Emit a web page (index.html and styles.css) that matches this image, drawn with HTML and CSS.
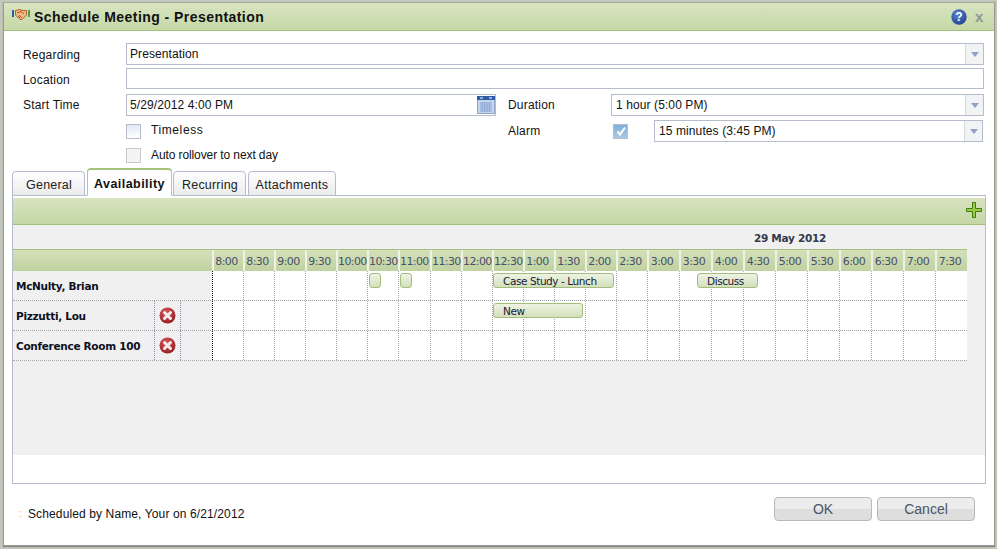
FILE: index.html
```html
<!DOCTYPE html>
<html lang="en">
<head>
<meta charset="utf-8">
<title>Schedule Meeting - Presentation</title>
<link rel="stylesheet" href="styles.css">
</head>
<body>
<div class="dialog">
  <header class="titlebar">
    <svg class="ti-icon" width="18" height="14" viewBox="0 0 18 14"><rect x="0" y="2" width="2" height="7" fill="#2f5f9e"/><rect x="16" y="2" width="2" height="7" fill="#5c9a4a"/><path d="M3.5 2.5 L8 1.5 L10 2.5 L14.5 2.5 L14.5 7 L10 11.5 L8 11.5 L3.5 7 Z" fill="#f0b98a" stroke="#b5642e"/><path d="M5 5 L9 3.5 L12 6 M7 7 L10 10 M6 8 L8 10" fill="none" stroke="#a8561f"/></svg>
    <span class="ti-text">Schedule Meeting - Presentation</span>
    <svg class="help" width="16" height="16" viewBox="0 0 16 16"><defs><radialGradient id="hg" cx="40%" cy="30%" r="80%"><stop offset="0" stop-color="#5b82cf"/><stop offset="1" stop-color="#1c3f8f"/></radialGradient></defs><circle cx="8" cy="8" r="7.7" fill="url(#hg)"/><text x="8" y="12.4" text-anchor="middle" class="help-q">?</text></svg>
    <span class="close">x</span>
  </header>

  <div class="form">
    <div class="row r-regarding">
      <label class="lbl">Regarding</label>
      <div class="field grow"><span class="val">Presentation</span><span class="drop"><i></i></span></div>
    </div>
    <div class="row r-location">
      <label class="lbl">Location</label>
      <div class="field grow"></div>
    </div>
    <div class="row r-start">
      <label class="lbl">Start Time</label>
      <div class="field start"><span class="val">5/29/2012 4:00 PM</span>
        <svg class="cal" width="18" height="18" viewBox="0 0 18 18"><rect x="0.5" y="0.5" width="17" height="17" fill="#c5d5ee" stroke="#8ea4c8"/><rect x="0" y="0" width="18" height="4" fill="#2f5aa5"/><rect x="3" y="1.5" width="3" height="1" fill="#fff"/><rect x="12" y="1.5" width="3" height="1" fill="#fff"/><path d="M3 7h12M3 9h12M3 11h12M3 13h12M3 15h12M5 6v10M7.5 6v10M10 6v10M12.5 6v10" stroke="#8ea9d8" stroke-width="1" fill="none"/></svg>
      </div>
      <label class="lbl2">Duration</label>
      <div class="field dur"><span class="val">1 hour (5:00 PM)</span><span class="drop"><i></i></span></div>
    </div>
    <div class="row r-alarm">
      <span class="cb"></span><span class="cbl">Timeless</span>
      <label class="lbl2 alarm">Alarm</label>
      <span class="cb checked"><svg width="12" height="12" viewBox="0 0 12 12"><path d="M2.5 6.5 L5 9.5 L10 2.5" fill="none" stroke="#fff" stroke-width="2"/></svg></span>
      <div class="field alm"><span class="val">15 minutes (3:45 PM)</span><span class="drop"><i></i></span></div>
    </div>
    <div class="row r-auto">
      <span class="cb off"></span><span class="cbl">Auto rollover to next day</span>
    </div>
  </div>

  <nav class="tabs">
    <span class="tab t1">General</span>
    <span class="tab active t2">Availability</span>
    <span class="tab t3">Recurring</span>
    <span class="tab t4">Attachments</span>
  </nav>

  <section class="panel">
    <div class="toolbar">
      <svg width="16" height="16" viewBox="0 0 16 16"><path d="M6.5 0.5h3v6h6v3h-6v6h-3v-6h-6v-3h6z" fill="#9ccb45" stroke="#3f7a12"/></svg>
    </div>
    <div class="sched">
      <div class="date"><span>29 May 2012</span></div>
      <div class="grid head">
        <div class="hname"></div>
        <div class="t">8:00</div><div class="t">8:30</div><div class="t">9:00</div><div class="t">9:30</div><div class="t">10:00</div><div class="t">10:30</div><div class="t">11:00</div><div class="t">11:30</div><div class="t">12:00</div><div class="t">12:30</div><div class="t">1:00</div><div class="t">1:30</div><div class="t">2:00</div><div class="t">2:30</div><div class="t">3:00</div><div class="t">3:30</div><div class="t">4:00</div><div class="t">4:30</div><div class="t">5:00</div><div class="t">5:30</div><div class="t">6:00</div><div class="t">6:30</div><div class="t">7:00</div><div class="t">7:30</div>
      </div>
      <div class="grid body">
        <div class="name plain">McNulty, Brian</div>
        <div class="c"></div><div class="c"></div><div class="c"></div><div class="c"></div><div class="c"></div><div class="c"></div><div class="c"></div><div class="c"></div><div class="c"></div><div class="c"></div><div class="c"></div><div class="c"></div><div class="c"></div><div class="c"></div><div class="c"></div><div class="c"></div><div class="c"></div><div class="c"></div><div class="c"></div><div class="c"></div><div class="c"></div><div class="c"></div><div class="c"></div><div class="c"></div>
        <span class="ev e1"></span><span class="ev e2"></span><span class="ev e3">Case Study - Lunch</span><span class="ev e4">Discuss</span>
      </div>
      <div class="grid body">
        <div class="name">Pizzutti, Lou</div>
        <div class="rm"><svg width="17" height="17" viewBox="0 0 17 17"><use href="#rmx"/></svg></div><div class="sp"></div>
        <div class="c"></div><div class="c"></div><div class="c"></div><div class="c"></div><div class="c"></div><div class="c"></div><div class="c"></div><div class="c"></div><div class="c"></div><div class="c"></div><div class="c"></div><div class="c"></div><div class="c"></div><div class="c"></div><div class="c"></div><div class="c"></div><div class="c"></div><div class="c"></div><div class="c"></div><div class="c"></div><div class="c"></div><div class="c"></div><div class="c"></div><div class="c"></div>
        <span class="ev e5">New</span>
      </div>
      <div class="grid body">
        <div class="name">Conference Room 100</div>
        <div class="rm"><svg width="17" height="17" viewBox="0 0 17 17"><use href="#rmx"/></svg></div><div class="sp"></div>
        <div class="c"></div><div class="c"></div><div class="c"></div><div class="c"></div><div class="c"></div><div class="c"></div><div class="c"></div><div class="c"></div><div class="c"></div><div class="c"></div><div class="c"></div><div class="c"></div><div class="c"></div><div class="c"></div><div class="c"></div><div class="c"></div><div class="c"></div><div class="c"></div><div class="c"></div><div class="c"></div><div class="c"></div><div class="c"></div><div class="c"></div><div class="c"></div>
      </div>
    </div>
  </section>

  <footer class="foot">
    <span class="dots">:</span>
    <span class="sched-by">Scheduled by Name, Your on 6/21/2012</span>
    <button class="btn ok">OK</button>
    <button class="btn">Cancel</button>
  </footer>
</div>
<svg class="defs" width="0" height="0"><defs>
  <radialGradient id="rg" cx="40%" cy="30%" r="80%"><stop offset="0" stop-color="#d8565a"/><stop offset="1" stop-color="#8e1c20"/></radialGradient>
  <g id="rmx"><circle cx="8.5" cy="8.5" r="8" fill="url(#rg)"/><path d="M5.5 5.5 L11.5 11.5 M11.5 5.5 L5.5 11.5" stroke="#f4ecec" stroke-width="3" stroke-linecap="round"/></g>
</defs></svg>
</body>
</html>
```
FILE: styles.css
```css
* { box-sizing: border-box; }
html, body { margin: 0; height: 100%; }
body {
  width: 997px; height: 549px; overflow: hidden;
  padding: 2px 2px 3px 3px;
  background: #c4c7bb;
  font-family: "Liberation Sans", Arial, sans-serif;
  font-size: 12px; color: #111;
}
.defs { position: absolute; }
.dialog {
  width: 992px; height: 544px;
  background: #fff;
  border: 1px solid #9b9b92;
  border-top-color: #a5a89e;
  display: flex; flex-direction: column;
  box-shadow: 0 1px 1px #888;
}
.titlebar {
  height: 28px; flex: none;
  display: flex; align-items: center;
  padding: 0 10px 0 8px;
  background: linear-gradient(#d8e4c0, #c5d8a7);
  border-bottom: 1px solid #a4bf7c;
}
.ti-icon { margin: -4px 4px 0 0; }
.ti-text { font-weight: bold; font-size: 14px; letter-spacing: .45px; color: #111; flex: 1; }
.help { margin-right: 8px; }
.help-q { font: bold 12px "Liberation Sans", sans-serif; fill: #fff; }
.close { font: bold 15px "Liberation Sans", sans-serif; color: #87998f; width: 9px; line-height: 12px; padding-top: 0; margin-top: 1px; }

.form { padding: 12px 10px 0 19px; flex: none; height: 141px; }
.row { display: flex; align-items: center; }
.r-regarding { height: 22px; margin-bottom: 3px; }
.r-location { height: 21px; margin-bottom: 5px; }
.r-start { height: 22px; margin-bottom: 4px; }
.r-alarm { height: 22px; margin-bottom: 4px; padding-left: 103px; }
.r-auto { height: 18px; padding-left: 103px; }
.lbl { width: 103px; flex: none; letter-spacing: .2px; }
.r-regarding .lbl { padding-top: 1px; }
.r-location .lbl { padding-top: 2px; }
.lbl2 { width: 103px; flex: none; letter-spacing: .2px; }
.field {
  height: 100%; border: 1px solid #b5bccd; background: #fff;
  display: flex; align-items: center; position: relative;
  padding-left: 3px;
}
.grow { flex: 1; }
.val { flex: 1; letter-spacing: .1px; padding-bottom: 1px; }
.start { width: 370px; margin-right: 12px; padding-right: 0; }
.cal { flex: none; }
.dur { width: 373px; padding-left: 4px; }
.alm { width: 329px; margin-left: 26px; padding-left: 4px; }
.drop {
  width: 18px; height: 100%; flex: none;
  background: #f1f3f5; border-left: 1px solid #d5d9e2;
  display: flex; align-items: center; justify-content: center;
}
.drop i {
  width: 0; height: 0;
  border: 4.5px solid transparent; border-top: 5px solid #8fa3c9; border-bottom: 0;
}
.cb {
  width: 15px; height: 15px; flex: none;
  border: 1px solid #b5bccd;
  background: linear-gradient(#dfe9f4, #fff);
}
.cb.off { border: 1px solid #c9c9c9; background: #f4f4f4; }
.cb.checked { background: linear-gradient(#7fb0d9, #a8cae6); display: flex; align-items: center; justify-content: center; margin-left: 2px; }
.cbl { margin-left: 10px; letter-spacing: -.1px; padding-bottom: 1px; }
.r-alarm .cbl { width: 357px; flex: none; letter-spacing: .6px; padding-bottom: 2px; }

.tabs { display: flex; align-items: flex-end; gap: 2px; padding-left: 8px; height: 27px; margin-top: -3px; flex: none; position: relative; z-index: 1; margin-bottom: -1px; }
.tab {
  height: 25px; text-align: center; line-height: 26px; font-size: 12.5px;
  border: 1px solid #b5bccd;
  border-radius: 4px 4px 0 0;
  background: linear-gradient(#fff, #ebebeb);
  color: #222; letter-spacing: .2px;
}
.t1 { width: 73px; padding-left: 1px; }
.t2 { width: 85px; }
.t3 { width: 73px; margin-left: -1px; padding-left: 1px; }
.t4 { width: 88px; letter-spacing: .3px; }
.tab.active {
  height: 28px; line-height: 28px; font-weight: bold; background: #fff; border-bottom-color: #fff;
  border-top: 2px solid #a4c27a; color: #111; letter-spacing: .45px;
}
.panel {
  margin: 0 8px; height: 289px; flex: none;
  border: 1px solid #b5bccd; background: #fff;
  padding-top: 2px;
}
.toolbar {
  height: 27px;
  background: linear-gradient(#d8e4c0, #c3d6a4);
  border-bottom: 1px solid #a4bf7c;
  display: flex; justify-content: flex-end; align-items: center;
  padding: 0 3px 3px 0;
}
.sched { height: 230px; background: #f0f0f0; }
.date { height: 24px; padding: 7px 0 0 741px; font: bold 10.5px "DejaVu Sans", sans-serif; color: #333a4d; letter-spacing: -.3px; }
.grid {
  display: grid; position: relative;
  width: 954px;
}
.head { grid-template-columns: 199px 31px 31px 31px 31px 31px 31px 32px 31px 31px 31px 31px 31px 31px 31px 32px repeat(9, 32px); height: 22px; border-top: 1px solid #a4bf7c;
  background: linear-gradient(#d3e0b9, #bfd2a0); }
.t {
  font: 11px "DejaVu Sans", sans-serif; letter-spacing: -.6px;
  color: #4a4f6b; text-align: center; line-height: 23px;
  border-left: 2px solid #eef2e6; padding-right: 4px;
  white-space: nowrap;
}
.body { height: 30px; grid-template-columns: 141px 27px 31px 31px 31px 31px 31px 31px 31px 32px 31px 31px 31px 31px 31px 31px 31px 32px repeat(9, 32px); border-bottom: 1px dotted #a8a8a8; }
.name { font: bold 10.5px "DejaVu Sans", sans-serif; letter-spacing: -.3px; color: #0c1022; padding: 9px 0 0 3px; white-space: nowrap; }
.name.plain { grid-column: span 3; }
.rm { border-left: 1px dotted #7f8fa8; border-right: 1px dotted #7f8fa8; display: flex; align-items: center; justify-content: center; }
.rm svg { display: block; }
.c { background: #fff; border-left: 1px dotted #a8a8a8; }
.body .name + .c, .body .sp + .c { border-left: 1px dotted #111; }
.ev {
  position: absolute; top: 2px; height: 15px;
  border: 1px solid #a4bd7e; border-radius: 3px;
  background: linear-gradient(#eef3e3, #d3e0bc);
  font: 10.5px "DejaVu Sans", sans-serif; letter-spacing: -.42px; color: #18203a; line-height: 15px; padding-left: 9px; white-space: nowrap;
}
.e1 { left: 356px; width: 12px; }
.e2 { left: 387px; width: 12px; }
.e3 { left: 480px; width: 121px; }
.e4 { left: 684px; width: 61px; }
.e5 { left: 480px; width: 90px; }

.foot { flex: 1; display: flex; align-items: flex-start; padding: 13px 19px 0 15px; }
.dots { color: #f2c14e; width: 9px; margin-top: 10px; font-size: 11px; }
.sched-by { flex: 1; margin-top: 10px; letter-spacing: .12px; }
.btn {
  width: 98px; height: 24px; margin-left: 5px;
  font: 14px "Liberation Sans", sans-serif; color: #4b5568;
  border: 1px solid #b9b9b9; border-radius: 4px;
  background: linear-gradient(#ececec 0 50%, #dedede 50% 100%);
  padding: 0;
}
```
